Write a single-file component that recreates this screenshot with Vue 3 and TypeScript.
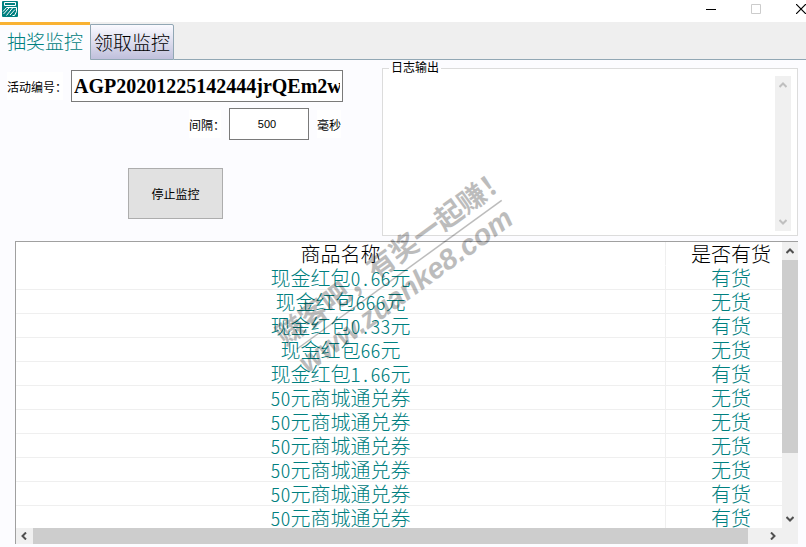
<script setup lang="ts">
import { ref } from 'vue'

interface Item {
  name: string
  inStock: boolean
}

const tabs: string[] = ['抽奖监控', '领取监控']
const activeTab = ref<number>(0)
const activityId = ref<string>('AGP20201225142444jrQEm2wV')
const interval = ref<string>('500')
const log = ref<string>('')

const coupon = '50元商城通兑券'
const items: Item[] = [
  { name: '现金红包0.66元', inStock: true },
  { name: '现金红包666元', inStock: false },
  { name: '现金红包0.33元', inStock: true },
  { name: '现金红包66元', inStock: false },
  { name: '现金红包1.66元', inStock: true },
  { name: coupon, inStock: false },
  { name: coupon, inStock: false },
  { name: coupon, inStock: false },
  { name: coupon, inStock: false },
  { name: coupon, inStock: true },
  { name: coupon, inStock: true },
]
</script>

<template>
  <div class="window">
    <header class="titlebar">
      <svg class="logo" viewBox="0 0 16 16" width="16" height="16" aria-hidden="true">
        <rect width="16" height="16" rx="1" fill="#008080" />
        <g fill="none" stroke="#fff" stroke-width="1">
          <path d="M2.500 1.500h11v3h-11z" />
          <path d="M1 10.500L4.500 6.500h10v4l-2 4h-2M7 7L1.500 13M10.500 7L4.500 14.500M13 8.500L8 14" />
        </g>
      </svg>
      <div class="controls">
        <button type="button" aria-label="最小化">
          <svg viewBox="0 0 10 10" width="10" height="10"><path d="M0 5.500h10" stroke="#000" /></svg>
        </button>
        <button type="button" aria-label="最大化" disabled>
          <svg viewBox="0 0 10 10" width="10" height="10"><path d="M.5 .5h9v9h-9z" fill="none" stroke="#ccc" /></svg>
        </button>
        <button type="button" aria-label="关闭">
          <svg viewBox="0 0 10 10" width="10" height="10"><path d="M0 0l10 10M10 0L0 10" stroke="#000" stroke-width="1.200" /></svg>
        </button>
      </div>
    </header>

    <nav class="tabs" role="tablist">
      <button
        v-for="(tab, i) in tabs"
        :key="tab"
        type="button"
        role="tab"
        class="tab"
        :class="{ active: i === activeTab }"
        :aria-selected="i === activeTab"
        @click="activeTab = i"
      >{{ tab }}</button>
      <span class="tab-rest"></span>
    </nav>

    <main class="panel">
      <div class="top">
        <form class="form" @submit.prevent>
          <div class="row">
            <label class="tall" for="activity">活动编号：</label>
            <input id="activity" v-model="activityId" class="activity" type="text" />
          </div>
          <div class="row end">
            <label for="interval">间隔：</label>
            <input id="interval" v-model="interval" class="interval" type="text" />
            <span class="unit">毫秒</span>
          </div>
          <button class="stop" type="button">停止监控</button>
        </form>

        <fieldset class="log">
          <legend><label for="log">日志输出</label></legend>
          <textarea id="log" v-model="log" readonly></textarea>
          <div class="log-bar">
            <svg viewBox="0 0 8 6" width="8" height="6"><path d="M.5 5L4 1.500L7.500 5" /></svg>
            <svg viewBox="0 0 8 6" width="8" height="6"><path d="M.5 1L4 4.500L7.500 1" /></svg>
          </div>
        </fieldset>
      </div>

      <section class="list">
        <div class="view">
          <table>
            <thead>
              <tr><th>商品名称</th><th class="stock">是否有货</th></tr>
            </thead>
            <tbody>
              <tr v-for="(item, i) in items" :key="i">
                <td>{{ item.name }}</td>
                <td>{{ item.inStock ? '有货' : '无货' }}</td>
              </tr>
            </tbody>
          </table>
        </div>
        <div class="vbar">
          <svg viewBox="0 0 8 6" width="8" height="6"><path d="M.5 5L4 1.500L7.500 5" /></svg>
          <div class="vtrack"><div class="vthumb"></div></div>
          <svg viewBox="0 0 8 6" width="8" height="6"><path d="M.5 1L4 4.500L7.500 1" /></svg>
        </div>
        <div class="hbar">
          <svg viewBox="0 0 6 8" width="6" height="8"><path d="M5 .5L1.500 4L5 7.500" /></svg>
          <div class="hthumb"></div>
          <svg viewBox="0 0 6 8" width="6" height="8"><path d="M1 .5L4.500 4L1 7.500" /></svg>
        </div>
      </section>
    </main>

    <svg class="watermark" viewBox="0 0 280 220" width="280" height="220" aria-hidden="true">
      <g transform="translate(32 179) rotate(-36)">
        <text class="mark-cn" x="-8" y="-9">赚客吧，有奖一起赚！</text>
        <path d="M0 0H253" />
        <text class="mark-url" x="-6" y="26">www.zuanke8.com</text>
      </g>
    </svg>
  </div>
</template>

<style>
body {
  margin: 0;
}
</style>

<style scoped>
.window {
  position: relative;
  display: flex;
  flex-direction: column;
  height: 100vh;
  overflow: hidden;
  background: #fcfcff;
  color: #000;
  font-family: "Liberation Sans", "Noto Sans CJK SC", sans-serif;
  font-size: 12px;
}
button,
input,
textarea {
  box-sizing: border-box;
  font-family: inherit;
  font-size: inherit;
  color: inherit;
  border-radius: 0;
  margin: 0;
}
.titlebar {
  display: flex;
  justify-content: space-between;
  align-items: flex-start;
  height: 22px;
  background: #fff;
}
.logo {
  margin: 1px 2px;
}
.controls {
  display: flex;
  gap: 35px;
}
.controls button {
  display: flex;
  padding: 4px 0;
  border: 0;
  background: none;
}
.tabs {
  display: flex;
  align-items: flex-end;
  height: 38px;
  background: #efefef;
}
.tab {
  height: 36px;
  padding: 0 3px;
  border: 1px solid #91a7b4;
  border-radius: 0 2px 0 0;
  background: linear-gradient(#fafaff, #c0c0dc);
  font-family: "Noto Sans CJK SC", sans-serif;
  font-size: 19px;
  font-weight: 300;
  line-height: 32px;
  white-space: nowrap;
}
.tab.active {
  height: 38px;
  padding: 0 7px 4px;
  border: 0;
  border-top: 3px solid #f9b233;
  border-radius: 0;
  background: #fcfcff;
  color: #008080;
}
.tab-rest {
  flex: 1;
  align-self: stretch;
  border-bottom: 1px solid #91a7b4;
}
.panel {
  flex: 1;
  display: flex;
  flex-direction: column;
  gap: 5px;
  min-height: 0;
  padding: 0 8px 3px 7px;
}
.top {
  display: flex;
  gap: 39px;
  height: 176px;
}
.form {
  display: flex;
  flex-direction: column;
  flex: none;
  width: 336px;
  padding-top: 10px;
}
.row {
  display: flex;
  align-items: center;
  gap: 8px;
  height: 32px;
  margin-bottom: 6px;
}
.row.end {
  justify-content: flex-end;
  padding-right: 2px;
}
.row label,
.unit {
  padding-top: 4px;
  background: #fff;
  line-height: 24px;
  white-space: nowrap;
}
.row label {
  width: 56px;
}
.row.end label {
  width: 32px;
}
.row input {
  height: 32px;
  border: 1px solid #7a7a7a;
  background: #fff;
}
.activity {
  flex: 1;
  min-width: 0;
  padding: 0 2px;
  font-family: "Liberation Serif", serif;
  font-size: 20px;
  font-weight: bold;
}
.interval {
  width: 80px;
  padding: 0 4px 0 0;
  font-size: 11px;
  text-align: center;
}
.stop {
  width: 95px;
  height: 51px;
  margin: 22px 0 0 121px;
  border: 1px solid #adadad;
  background: #e1e1e1;
}
.log {
  flex: 1;
  display: flex;
  min-width: 0;
  margin: 0;
  padding: 0 6px 4px 4px;
  border: 1px solid #dcdcdc;
  background: #fff;
}
.log legend {
  margin-left: 2px;
  padding: 0 2px;
  line-height: 16px;
}
.log textarea {
  flex: 1;
  min-width: 0;
  padding: 0;
  border: 0;
  outline: 0;
  background: #fff;
  resize: none;
}
.log-bar {
  display: flex;
  flex-direction: column;
  justify-content: space-between;
  align-items: center;
  width: 16px;
  padding: 6px 0;
  box-sizing: border-box;
  background: #f0f0f0;
}
.log-bar path {
  fill: none;
  stroke: #bfbfbf;
  stroke-width: 2;
}
.list {
  flex: 1;
  display: grid;
  grid-template: minmax(0, 1fr) 16px / minmax(0, 1fr) 16px;
  min-height: 0;
  margin: 0 0 0 8px;
  border: solid #a0a0a0;
  border-width: 1px 0 0 1px;
  background: #fff;
}
.view {
  overflow: hidden;
}
table {
  width: calc(100% + 14px);
  table-layout: fixed;
  border-collapse: separate;
  border-spacing: 0;
  font-family: "Noto Sans CJK SC", sans-serif;
  font-size: 20px;
  font-weight: 300;
  font-feature-settings: "hwid";
}
th,
td {
  box-sizing: border-box;
  height: 24px;
  padding: 0;
  border-bottom: 1px solid #efefef;
  font-weight: inherit;
  line-height: 23px;
  text-align: center;
  white-space: nowrap;
}
th {
  border-bottom-color: #fff;
}
td {
  color: #008080;
}
th:first-child,
td:first-child {
  border-right: 1px solid #efefef;
}
.stock {
  width: 130px;
}
.vbar {
  display: flex;
  flex-direction: column;
  align-items: center;
  padding: 6px 0;
  gap: 6px;
  background: #f0f0f0;
}
.vtrack {
  flex: 1;
  width: 100%;
}
.vthumb {
  height: 77%;
  background: #cdcdcd;
}
.hbar {
  grid-column: 1 / 3;
  display: flex;
  align-items: center;
  gap: 6px;
  padding: 0 22px 0 5px;
  background: #f0f0f0;
}
.hthumb {
  flex: 1;
  align-self: stretch;
  margin-right: 16px;
  background: #cdcdcd;
}
.vbar path,
.hbar path {
  fill: none;
  stroke: #505050;
  stroke-width: 2;
}
.watermark {
  position: absolute;
  left: 265px;
  top: 170px;
  pointer-events: none;
  opacity: 0.26;
}
.watermark text {
  font-weight: bold;
}
.watermark path {
  stroke: #000;
  stroke-width: 1.500;
}
.mark-cn {
  font-family: "Noto Sans CJK SC", sans-serif;
  font-size: 28px;
}
.mark-url {
  font-family: "Liberation Sans", sans-serif;
  font-size: 29px;
  font-style: italic;
}
</style>
